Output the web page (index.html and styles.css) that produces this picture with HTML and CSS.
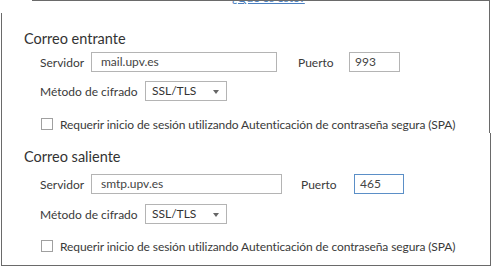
FILE: index.html
```html
<!DOCTYPE html>
<html lang="es">
<head>
<meta charset="utf-8">
<title>Configuración de correo</title>
<link rel="stylesheet" href="styles.css">
</head>
<body>
<div class="frame">
  <div class="corner"></div>
  <section class="panel panel-top">
    <div class="toplink"><a href="#">¿Qué es esto?</a></div>
    <h2 class="title">Correo entrante</h2>
    <div class="row row-server">
      <span class="label lbl-server">Servidor</span>
      <span class="input server">mail.upv.es</span>
      <span class="label port-label">Puerto</span>
      <span class="input port">993</span>
    </div>
    <div class="row row-method">
      <span class="label lbl-method">Método de cifrado</span>
      <span class="select">SSL/TLS<span class="arrow"></span></span>
    </div>
    <div class="row row-check">
      <span class="checkbox"></span>
      <span class="label check-label">Requerir inicio de sesión utilizando Autenticación de contraseña segura (SPA)</span>
    </div>
  </section>
  <section class="panel panel-bottom">
    <h2 class="title">Correo saliente</h2>
    <div class="row row-server">
      <span class="label lbl-server">Servidor</span>
      <span class="input server wide">smtp.upv.es</span>
      <span class="label port-label wide-port">Puerto</span>
      <span class="input port focus">465</span>
    </div>
    <div class="row row-method">
      <span class="label lbl-method">Método de cifrado</span>
      <span class="select">SSL/TLS<span class="arrow"></span></span>
    </div>
    <div class="row row-check">
      <span class="checkbox"></span>
      <span class="label check-label">Requerir inicio de sesión utilizando Autenticación de contraseña segura (SPA)</span>
    </div>
  </section>
</div>
</body>
</html>
```
FILE: styles.css
```css
html, body {
  margin: 0;
  padding: 0;
  background: #fff;
}
body {
  width: 491px;
  height: 267px;
  overflow: hidden;
  font-family: "Lato", "Noto Sans", sans-serif;
  color: #3a3a3a;
}
.frame {
  position: relative;
  width: 489px;
  margin-left: 1px;
  border-left: 1px solid #6a6a6a;
  box-sizing: border-box;
}
.corner {
  position: absolute;
  left: -2px;
  top: 0;
  width: 32px;
  height: 13px;
  background: #fff;
}
.panel {
  box-sizing: border-box;
}
.panel-top {
  height: 133px;
  border-top: 1px solid #6a6a6a;
  border-right: 1px solid #6a6a6a;
}
.panel-bottom {
  height: 133px;
  width: 489px;
  border-right: 1px solid #6a6a6a;
  border-bottom: 1px solid #6a6a6a;
  padding-top: 14px;
}
.toplink {
  height: 3px;
  overflow: hidden;
  display: flex;
  align-items: flex-end;
  padding-left: 230px;
}
.toplink a {
  font-size: 12px;
  line-height: 12px;
  color: #4a7fc0;
}
.title {
  margin: 25px 0 0 22px;
  font-size: 14.5px;
  font-weight: normal;
  line-height: 20px;
  color: #333;
}
.panel-bottom .title {
  margin-top: 0;
}
.row {
  display: flex;
  align-items: center;
  font-size: 12px;
  margin-left: 38px;
}
.row-server {
  height: 20px;
  margin-top: 3px;
}
.panel-bottom .row-server {
  margin-top: 7px;
}
.row-method {
  height: 20px;
  margin-top: 9px;
}
.panel-bottom .row-method {
  margin-top: 10px;
}
.row-check {
  margin-top: 16px;
  height: 14px;
}
.panel-bottom .row-check {
  margin-top: 15px;
}
.label {
  white-space: nowrap;
}
.check-label {
  letter-spacing: -0.1px;
}
.lbl-server {
  width: 51px;
  flex-shrink: 0;
}
.lbl-method {
  width: 105px;
  flex-shrink: 0;
}
.input {
  box-sizing: border-box;
  height: 20px;
  border: 1px solid #b4b4b4;
  padding-left: 9px;
  font-size: 12px;
  line-height: 18px;
  color: #444;
  flex-shrink: 0;
}
.server {
  width: 186px;
}
.server.wide {
  width: 191px;
}
.port-label {
  width: 51px;
  margin-left: 21px;
  flex-shrink: 0;
}
.port-label.wide-port {
  width: 53px;
  margin-left: 19px;
}
.port {
  width: 51px;
  padding-left: 5px;
}
.focus {
  width: 50px;
  border-color: #5b8fc7;
}
.select {
  position: relative;
  box-sizing: border-box;
  flex-shrink: 0;
  width: 82px;
  height: 20px;
  border: 1px solid #b4b4b4;
  padding-left: 6px;
  line-height: 18px;
  font-size: 12px;
  color: #333;
  display: flex;
  align-items: center;
}
.arrow {
  position: absolute;
  right: 7px;
  top: 8px;
  width: 0;
  height: 0;
  border-left: 3px solid transparent;
  border-right: 3px solid transparent;
  border-top: 4px solid #666;
}
.checkbox {
  box-sizing: border-box;
  flex-shrink: 0;
  width: 12px;
  height: 12px;
  border: 1px solid #a0a0a0;
  margin-left: 1px;
  margin-right: 7px;
}
```
